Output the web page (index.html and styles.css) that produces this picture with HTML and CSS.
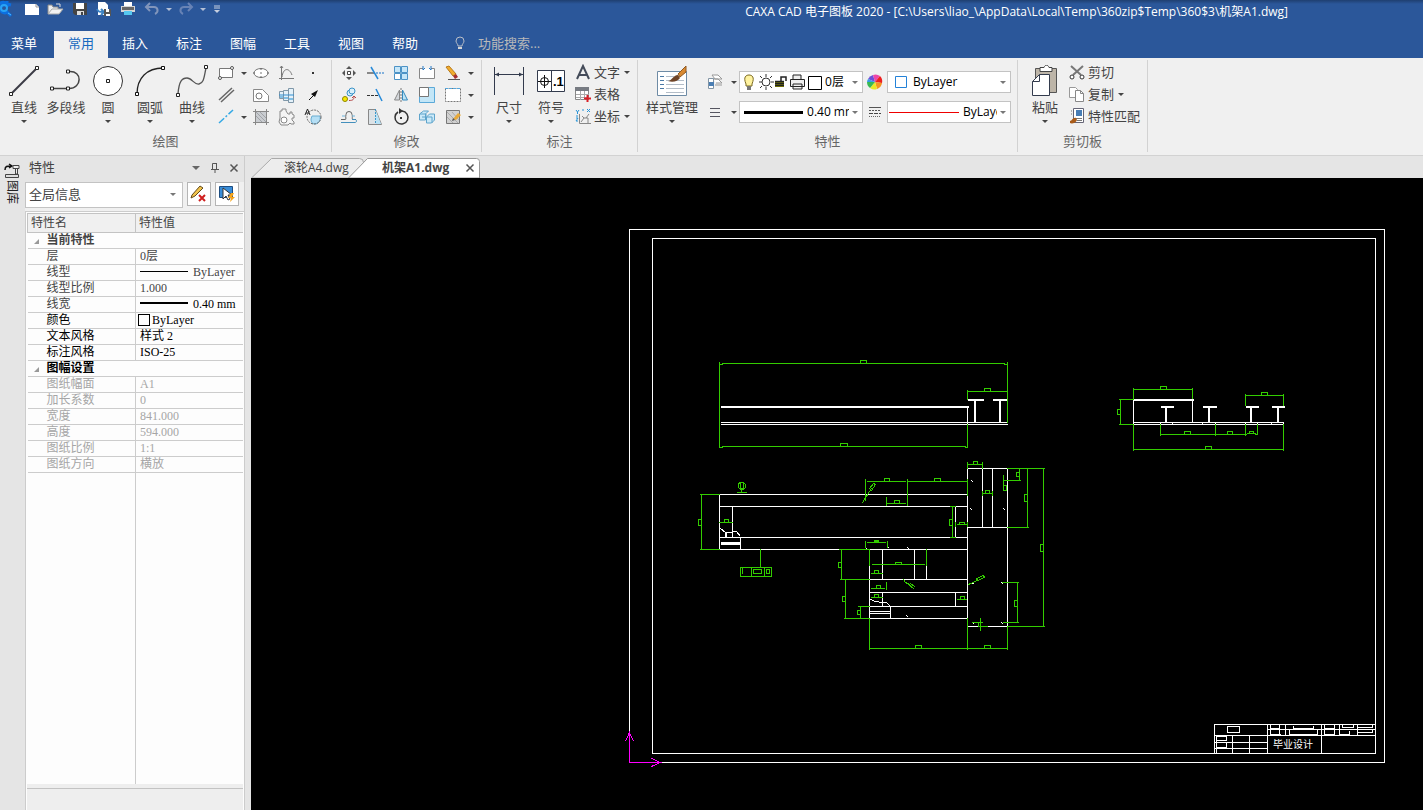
FILE: index.html
```html
<!DOCTYPE html>
<html lang="zh-CN">

<head>
    <meta charset="UTF-8">
    <title>CAXA CAD 电子图板 2020</title>
    <link rel="stylesheet" href="styles.css">
</head>

<body>
    <header class="top">
        <div class="title-bar">
            <div class="quick">
                <button class="logo" aria-label="CAXA"><svg width="20" height="18" viewBox="0 0 20 18"><path d="M-3 9a6 6 0 0 1 10-5M7 4l4 1M7 4l0-3M8 7a4 4 0 1 0-1 5l4 4" fill="none" stroke="#0c6fe0" stroke-width="3"/><circle cx="4" cy="8" r="3" fill="none" stroke="#29a3f5" stroke-width="2"/><path d="M8 13l3 2" stroke="#4fb9ff" stroke-width="1"/></svg></button>
                <button aria-label="新建"><svg width="18" height="18"><path d="M2 4h11l3 3v8H2z" fill="#fff"/><path d="M13 4v3h3" fill="none" stroke="#999"/></svg></button>
                <button aria-label="打开"><svg width="18" height="18"><path d="M1 14V5h4l1 2h5v2" fill="#eee" stroke="#888"/><path d="M1 14l4-5h11l-4 5z" fill="#f2f2f2" stroke="#aaa"/><path d="M9 4h4v3" fill="none" stroke="#ddd"/></svg></button>
                <button aria-label="保存"><svg width="18" height="18"><path d="M2 3h14v12H4l-2-2z" fill="#444"/><path d="M5 3h8v6H5z" fill="#fff"/><path d="M6 11h7v4H6z" fill="#ddd"/><path d="M10 12h2v3h-2z" fill="#444"/></svg></button>
                <button aria-label="另存为"><svg width="18" height="18"><path d="M3 2h7l3 3v10H3z" fill="#fff"/><path d="M2 9c1 3 3 3 6 3M6 9l3 3-3 3" fill="none" stroke="#3b82c4" stroke-width="2"/><path d="M9 9h7v7H9z" fill="#555"/><path d="M11 9h3v3h-3zM11 14h4v2h-4z" fill="#fff"/></svg></button>
                <button aria-label="打印"><svg width="18" height="18"><path d="M5 2h8v4H5z" fill="#fff"/><path d="M2 6h14v6H2z" fill="#d5d5d5"/><path d="M3 7h12v3H3z" fill="#666"/><path d="M5 11h8v4H5z" fill="#56c8f0"/></svg></button>
                <button aria-label="撤销"><svg width="18" height="18"><path d="M3 7h8c4 0 5 5 1 7M7 3L3 7l4 4" fill="none" stroke="#8195bb" stroke-width="2"/></svg></button>
                <button class="drop" aria-label="撤销列表"><i class="arrow pale"></i></button>
                <button aria-label="恢复"><svg width="18" height="18"><path d="M15 7H7c-4 0-5 5-1 7M11 3l4 4-4 4" fill="none" stroke="#6883b5" stroke-width="2"/></svg></button>
                <button class="drop" aria-label="恢复列表"><i class="arrow pale"></i></button>
                <button class="more" aria-label="自定义"><svg width="18" height="18"><path d="M6 6h6M6 8h6" stroke="#c6cfdf"/><path d="M6 10h6l-3 3z" fill="#c6cfdf"/></svg></button>
            </div>
            <h1>CAXA CAD 电子图板 2020 - [C:\Users\liao_\AppData\Local\Temp\360zip$Temp\360$3\机架A1.dwg]</h1>
        </div>
        <nav class="menu">
            <button class="first">菜单</button>
            <button class="active">常用</button>
            <button>插入</button>
            <button>标注</button>
            <button>图幅</button>
            <button>工具</button>
            <button>视图</button>
            <button>帮助</button>
            <label class="search">
                <svg width="12" height="14" viewBox="0 0 12 14"><path d="M4 10c0-2-2-3-2-5a4 4 0 0 1 8 0c0 2-2 3-2 5z" fill="none" stroke="#b9bec8"/><path d="M4 11h4v2H4z" fill="#d5d5d5"/></svg>
                <input type="text" placeholder="功能搜索..." aria-label="功能搜索">
            </label>
        </nav>
    </header>

    <section class="ribbon">
        <!-- 绘图 -->
        <div class="group draw">
            <div class="tools">
                <button class="big"><svg width="32" height="32"><path d="M3 29L29 3" stroke="#3b3b45" stroke-width="2"/><path d="M1.500 27.500h3v3h-3zM27.500 1.500h3v3h-3z" fill="#fff" stroke="#222"/></svg><span>直线</span><i class="arrow"></i></button>
                <button class="big"><svg width="32" height="32"><path d="M2 23.500h17c13 0 14-18 0-17" fill="none" stroke="#444" stroke-width="1.500"/><path d="M.5 22h3v3h-3zM16.500 22h3v3h-3zM16.500 5h3v3h-3z" fill="#fff" stroke="#222"/></svg><span>多段线</span></button>
                <button class="big"><svg width="32" height="32"><circle cx="16" cy="16" r="14.500" fill="#fff" stroke="#333"/><path d="M14.500 14.500h3v3h-3z" fill="#fff" stroke="#222"/></svg><span>圆</span><i class="arrow"></i></button>
                <button class="big"><svg width="32" height="32"><path d="M3 29C3 13 13 3 29 3" fill="none" stroke="#222" stroke-width="1.300"/><path d="M1.500 27.500h3v3h-3zM27.500 1.500h3v3h-3z" fill="#fff" stroke="#111"/></svg><span>圆弧</span><i class="arrow"></i></button>
                <button class="big"><svg width="32" height="32"><path d="M2 29C3 16 6 13 11 13s7 7 12 6S28 12 30 3" fill="none" stroke="#555" stroke-width="1.300"/><path d="M.5 28.500h3v3h-3zM28.500.5h3v3h-3z" fill="#fff" stroke="#222"/></svg><span>曲线</span><i class="arrow"></i></button>
                <div class="small-grid cols-draw">
                    <button aria-label="矩形"><svg width="18" height="18"><path d="M2.500 4.500h13v9h-13z" fill="#fff" stroke="#777"/><circle cx="3" cy="14" r="1.500" fill="#fff" stroke="#555"/><circle cx="15" cy="4" r="1.500" fill="#fff" stroke="#555"/></svg></button>
                    <button class="drop" aria-label="矩形选项"><i class="arrow"></i></button>
                    <button aria-label="椭圆"><svg width="18" height="18"><ellipse cx="9" cy="9" rx="7" ry="4.500" fill="#fff" stroke="#777"/><path d="M1 9h2M15 9h2M9 4v2M9 12v2" stroke="#666"/><path d="M8 9h2" stroke="#777"/></svg></button>
                    <button aria-label="公式曲线"><svg width="18" height="18"><path d="M3.500 2v14M1 14.500h15M4 13C5 4 11 3 14 11M2 4l1.500-2L5 4" fill="none" stroke="#777"/></svg></button>
                    <button aria-label="点"><svg width="18" height="18"><path d="M8 8h2v2H8z" fill="#333"/></svg></button>

                    <button aria-label="平行线"><svg width="18" height="18"><path d="M2 14L15 2M4 16L17 4" stroke="#666" stroke-width="1.500"/></svg></button>
                    <span></span>
                    <button aria-label="轮廓"><svg width="18" height="18"><path d="M1.500 3.500h9l6 6v6h-15z" fill="#fff" stroke="#888"/><circle cx="7" cy="10" r="3" fill="#fff" stroke="#777"/></svg></button>
                    <button aria-label="轴孔"><svg width="18" height="18"><path d="M1.500 5.500h4v7h-4zM5.500 4.500h5v10h-5zM10.500 2.500h5v14h-5z" fill="#e4f1f9" stroke="#7f97a8"/><path d="M1 9h15" stroke="#338fd0"/><path d="M2 11h3M6 12h4M11 13h4" stroke="#7fbfe6" stroke-width="2"/></svg></button>
                    <button aria-label="箭头"><svg width="18" height="18"><path d="M5 14l5-5" stroke="#111"/><path d="M14 4L7 8l4 3z" fill="#111"/></svg></button>

                    <button aria-label="中心线"><svg width="18" height="18"><path d="M2 15L16 2" stroke="#35a9e5" stroke-width="1.500" stroke-dasharray="7 2 2 2"/></svg></button>
                    <button class="drop" aria-label="中心线选项"><i class="arrow"></i></button>
                    <button aria-label="剖面线"><svg width="18" height="18"><path d="M3 3h12v12H3z" fill="#c9ccd0"/><path d="M1 3.500h16M1 14.500h16M3.500 1v16M14.500 1v16" stroke="#888"/><path d="M4 8l6 6M4 4l10 10M8 4l6 6" stroke="#a0a3a8"/></svg></button>
                    <button aria-label="齿轮"><svg width="18" height="18"><path d="M2 7V3h2V1h4v2l2 3h2V4h2v2l2 1v3h-2v2l2 2v2h-3l-1-1-2 2H3l-2-3 1-4z" fill="#f4f4f4" stroke="#888"/><circle cx="6" cy="12" r="3" fill="#fff" stroke="#888"/></svg></button>
                    <button aria-label="局部放大"><svg width="18" height="18"><path d="M8 8h8c1 5-2 8-5 8s-4-2-4-5z" fill="#b5dff5" stroke="#6aaed2"/><circle cx="10" cy="9" r="7" fill="none" stroke="#666" stroke-dasharray="2 1"/><path d="M1 7l2.500-6L6 7M2 5h3" fill="none" stroke="#222"/></svg></button>
                </div>
            </div>
            <h2>绘图</h2>
        </div>

        <!-- 修改 -->
        <div class="group edit">
            <div class="tools">
                <div class="small-grid cols-edit">
                    <button aria-label="平移"><svg width="18" height="18"><path d="M9 2l3 3H6zM9 16l3-3H6zM2 9l3-3v6zM16 9l-3-3v6z" fill="#555"/><path d="M7.500 7.500h3v3h-3z" fill="#fff" stroke="#444"/></svg></button>
                    <button aria-label="裁剪"><svg width="18" height="18"><path d="M1 9h8" stroke="#222"/><path d="M10 9h8" stroke="#1673c8" stroke-dasharray="2 1"/><path d="M5 3l7 12" stroke="#278ad8" stroke-width="1.500"/></svg></button>
                    <button aria-label="阵列"><svg width="18" height="18"><path d="M2.500 2.500h6v6h-6zM9.500 2.500h6v6h-6zM9.500 9.500h6v6h-6z" fill="#c6e6f8" stroke="#4c93c6"/><path d="M2.500 9.500h6v6h-6z" fill="#fff" stroke="#4c93c6"/></svg></button>
                    <button aria-label="打断"><svg width="18" height="18"><path d="M5 4.500H1.500v10h15v-10H13" fill="#fff" stroke="#888"/><path d="M5 2v4l2-2M13 2v4l-2-2" fill="none" stroke="#2479c6"/></svg></button>
                    <button aria-label="删除"><svg width="18" height="18"><path d="M2 3l3-1 7 8-3 2z" fill="#f2ad2e" stroke="#b87a1c"/><path d="M9 12l3-2 2 3-3 2z" fill="#a62f2f"/><path d="M4 15.500h12" stroke="#555"/></svg></button>
                    <button class="drop" aria-label="删除选项"><i class="arrow"></i></button>

                    <button aria-label="平移复制"><svg width="18" height="18"><circle cx="5" cy="13" r="2.500" fill="#f6e800" stroke="#8e8600"/><circle cx="10" cy="7" r="3" fill="#d8effa" stroke="#3b93c8"/><circle cx="12" cy="5" r="3" fill="#d8effa" stroke="#3b93c8"/><path d="M9 14.500c4 0 5-1 5-4M12 12l2-2 2 2" fill="none" stroke="#b44747"/></svg></button>
                    <button aria-label="延伸"><svg width="18" height="18"><path d="M1 9.500h3M5 9.500h7" stroke="#333" stroke-dasharray="3 1"/><path d="M10 3l6 12" stroke="#278ad8" stroke-width="1.500"/></svg></button>
                    <button aria-label="镜像"><svg width="18" height="18"><path d="M7.500 4v10h-5z" fill="#d4d7db" stroke="#888"/><path d="M10.500 4v10h5z" fill="#bde3f5" stroke="#358abd"/><path d="M9 2v14" stroke="#777" stroke-dasharray="2 1"/></svg></button>
                    <button aria-label="缩放"><svg width="18" height="18"><path d="M1.500 1.500h15v15h-15z" fill="#c3e6f7" stroke="#5ba9d8"/><path d="M1.500 1.500h9v9h-9z" fill="#fff" stroke="#777"/></svg></button>
                    <button aria-label="拉伸"><svg width="18" height="18"><path d="M1.500 2.500h15v13h-15z" fill="#fff" stroke="#777" stroke-dasharray="2 1"/><path d="M1 2.500h16" stroke="#55a7dd" stroke-dasharray="3 1"/></svg></button>
                    <button class="drop" aria-label="拉伸选项"><i class="arrow"></i></button>

                    <button aria-label="等距线"><svg width="18" height="18"><path d="M1 11.500h4c2 0 0-2 1-5a3 3 0 0 1 6 0c1 3-1 5 2 5h2" fill="none" stroke="#666"/><path d="M1 14.500h14c2 0 2-3 0-3h-3" fill="none" stroke="#438fbc"/><path d="M2 8h3M12 8h3" stroke="#6fb4dc"/></svg></button>
                    <button aria-label="倒角"><svg width="18" height="18"><path d="M2.500 1.500h7l6 15h-13z" fill="#dce2e6" stroke="#888"/><path d="M10 3l5 13h-5z" fill="#b9e2f6"/><path d="M9.500 1v15" stroke="#3b97cb" stroke-dasharray="2 1"/></svg></button>
                    <button aria-label="旋转"><svg width="18" height="18"><path d="M10 3a6.500 6.500 0 1 1-4 1" fill="none" stroke="#333" stroke-width="1.500"/><path d="M7 0v6l4-3z" fill="#333"/><path d="M8 9h2v2H8z" fill="#333"/></svg></button>
                    <button aria-label="分解"><svg width="18" height="18"><path d="M1.500 6l4-3h5l-3 3v6h-6zM8.500 9l3-3h5v6l-3 3h-5z" fill="#cbe9f8" stroke="#5fa4cb"/><path d="M2 6h6v6M9 9h5v6M4 9h4" fill="none" stroke="#5fa4cb"/></svg></button>
                    <button aria-label="填充编辑"><svg width="18" height="18"><path d="M2.500 2.500h13v13h-13z" fill="#d1d1d1" stroke="#777"/><path d="M3 9l6 6M3 4l11 11M8 4l7 8" stroke="#aaa"/><path d="M9 11l5-6 3 2-5 5z" fill="#e7a93a"/><path d="M8 13l1-3 2 2z" fill="#555"/></svg></button>
                    <button class="drop" aria-label="编辑选项"><i class="arrow"></i></button>
                </div>
            </div>
            <h2>修改</h2>
        </div>

        <!-- 标注 -->
        <div class="group note">
            <div class="tools">
                <button class="big"><svg width="32" height="32"><path d="M1.500 2v28M30.500 2v28M2 9.500h28" stroke="#333b4d"/><path d="M2 9.500l4-2v4zM30 9.500l-4-2v4z" fill="#333b4d"/></svg><span>尺寸</span><i class="arrow"></i></button>
                <button class="big"><svg width="32" height="32"><path d="M2.500 5.500h27v21h-27zM16.500 5v22" fill="#fff" stroke="#333b4d"/><circle cx="9.500" cy="16.500" r="4" fill="none" stroke="#111"/><path d="M3 16.500h13M9.500 10v13" stroke="#111"/><text x="18" y="21" class="icon-text">.1</text></svg><span>符号</span><i class="arrow"></i></button>
                <div class="list">
                    <button><svg width="16" height="16"><path d="M2 15L8 2l6 13M4 11h8" fill="none" stroke="#444b59" stroke-width="2"/></svg><span>文字</span><i class="arrow"></i></button>
                    <button><svg width="16" height="16"><path d="M.5 1.500h13v12H.5z" fill="#fff" stroke="#888"/><path d="M0 1h14v4H0z" fill="#777b82"/><path d="M1 8.500h13M1 11.500h13M5.500 5v9M9.500 5v9" stroke="#aaa"/><path d="M9 12.500h7M12.500 9v7" stroke="#d91f26" stroke-width="2"/></svg><span>表格</span></button>
                    <button><svg width="16" height="16"><path d="M4.500 6v9.500H16M6 14l3-4-2-2M9 10h4v5M11 10l3-4" fill="none" stroke="#888"/><path d="M1 2l1.500 2L4 2M2.500 4v2M12 1l3 3M15 1l-3 3M1 10h2l-2 3h2M7 2h2M1 8h2" fill="none" stroke="#2794d8"/></svg><span>坐标</span><i class="arrow"></i></button>
                </div>
            </div>
            <h2>标注</h2>
        </div>

        <!-- 特性 -->
        <div class="group props">
            <div class="tools">
                <button class="big wide"><svg width="32" height="32"><path d="M1.500 6.500h29v24h-29z" fill="#fff" stroke="#6e8ba5"/><path d="M4 11.500h4M4 15.500h4M4 19.500h4M4 23.500h4" stroke="#4b79a5"/><path d="M10 11.500h8M10 15.500h18M10 19.500h18M10 23.500h18M10 27.500h18" stroke="#b3bdc8"/><path d="M22 9l8-8v6l-6 5z" fill="#d98a32" stroke="#8f5820"/><path d="M12 16c4 0 5-6 10-6l2 3c-2 3-7 5-12 3z" fill="#6f4426"/></svg><span>样式管理</span><i class="arrow"></i></button>
                <div class="combos">
                    <button aria-label="图层"><svg width="18" height="18"><path d="M6 2h6l4 4h-7zM7 6h5l4 4h-6M9 12h7" fill="#fff" stroke="#999"/><path d="M2.500 5.500h5v10h-5z" fill="#fff" stroke="#8295a5"/><path d="M3 9h5v4H3z" fill="#4c7fb3"/></svg></button>
                    <button class="drop" aria-label="图层选项"><i class="arrow"></i></button>
                    <div class="combo">
                        <svg width="84" height="18">
                            <path d="M6 11C3 4 6 2 9 2s6 2 3 9v2H6z" fill="#fff3a0" stroke="#7b6920"/><path d="M7 13h4v4H7z" fill="#777"/>
                            <circle cx="26" cy="9" r="4" fill="#fff" stroke="#333"/><path d="M26 1v3M26 14v3M19 9h3M31 9h3M20 3l2 2M32 3l-2 2M20 15l2-2M32 15l-2-2" stroke="#333"/>
                            <path d="M35 8h9v6h-9z" fill="#8b8c00"/><path d="M35 8.500h9M35 10.500h9M35 12.500h9M41 8V4h5v4" fill="none" stroke="#222" stroke-width="1.500"/>
                            <path d="M53 6V2h8v4M50.500 6.500h14v7h-14zM53 11h9v5h-9z" fill="#eee" stroke="#222"/>
                            <path d="M68.500 3.500h13v13h-13z" fill="#fff" stroke="#000"/>
                        </svg>
                        <select class="layer" aria-label="图层"><option>0层</option></select><i class="arrow grey"></i>
                    </div>
                    <span class="cell"><svg width="16" height="16"><path d="M8 8L1 5a7.500 7.500 0 0 1 5-4z" fill="#6d4fd8"/><path d="M8 8L6 1a7.500 7.500 0 0 1 7 1z" fill="#ed46a7"/><path d="M8 8l5-6a7.500 7.500 0 0 1 2 7z" fill="#ed2020"/><path d="M8 8l7 1a7.500 7.500 0 0 1-5 6z" fill="#f59520"/><path d="M8 8l2 7a7.500 7.500 0 0 1-7-1z" fill="#e9e827"/><path d="M8 8l-5 6a7.500 7.500 0 0 1-3-6z" fill="#38b952"/><path d="M8 8L0 8a7.500 7.500 0 0 1 1-3z" fill="#369be9"/></svg></span>
                    <div class="combo">
                        <svg width="20" height="16"><path d="M7.500 2.500h11v11h-11z" fill="#fff" stroke="#2482d8"/></svg>
                        <select class="color" aria-label="颜色"><option>ByLayer</option></select><i class="arrow grey"></i>
                    </div>

                    <button aria-label="线宽设置"><svg width="18" height="18"><path d="M4 5.500h10M4 9.500h10M4 13.500h10" stroke="#555560"/></svg></button>
                    <button class="drop" aria-label="线宽选项"><i class="arrow"></i></button>
                    <div class="combo">
                        <svg width="64" height="16"><path d="M4 8.500h59" stroke="#000" stroke-width="3"/></svg>
                        <select aria-label="线宽"><option>0.40 mm</option></select><i class="arrow grey"></i>
                    </div>
                    <span class="cell"><svg width="14" height="16"><path d="M1 3.500h12" stroke="#555"/><path d="M1 6.500h12" stroke="#555" stroke-dasharray="2 1"/><path d="M1 9.500h12" stroke="#444" stroke-dasharray="4 1"/><path d="M1 12.500h12" stroke="#666" stroke-dasharray="1 1"/></svg></span>
                    <div class="combo">
                        <svg width="72" height="16"><path d="M1 8.500h70" stroke="#e00"/></svg>
                        <select aria-label="线型"><option>ByLayer</option></select><i class="arrow grey"></i>
                    </div>
                </div>
            </div>
            <h2>特性</h2>
        </div>

        <!-- 剪切板 -->
        <div class="group clip">
            <div class="tools">
                <button class="big"><svg width="32" height="32"><path d="M6.500 3.500h21v24h-21z" fill="#bdb5a8" stroke="#555"/><path d="M11 2.500h4c1-3 4-3 5 0h3v4H11z" fill="#fff" stroke="#444"/><path d="M10.500 9.500h10v21h-17v-14z" fill="#fff" stroke="#333b4d"/><path d="M10.500 9.500v7h-7" fill="none" stroke="#333b4d"/></svg><span>粘贴</span><i class="arrow"></i></button>
                <div class="list">
                    <button><svg width="16" height="16"><path d="M2 2l10 9M14 2L4 11" stroke="#777" stroke-width="2"/><circle cx="3" cy="13" r="2" fill="#fff" stroke="#333"/><circle cx="13" cy="13" r="2" fill="#fff" stroke="#333"/></svg><span>剪切</span></button>
                    <button><svg width="16" height="16"><path d="M.5 1.500h6l2 2v8h-8z" fill="#fff" stroke="#999"/><path d="M6.500 4.500h5l3 3v8h-8z" fill="#fff" stroke="#888"/><path d="M11.500 4.500v3h3" fill="none" stroke="#888"/></svg><span>复制</span><i class="arrow"></i></button>
                    <button><svg width="16" height="16"><path d="M4.500.5h10v14h-10z" fill="#fff" stroke="#667"/><path d="M7 2h6v6H7z" fill="#477db5"/><path d="M2 3h1M2 6h1M7 10.500h6M8 12.500h5" stroke="#777"/><path d="M1 13c2 0 3-4 6-3l1 2c-1 3-5 4-7 3z" fill="#a95b19"/></svg><span>特性匹配</span></button>
                </div>
            </div>
            <h2>剪切板</h2>
        </div>
    </section>

    <main class="work">
        <aside class="side">
            <button class="side-tab"><svg width="16" height="16"><path d="M1 7c0-4 2-4 6-4M5 1l3 2-3 2" fill="none" stroke="#111" stroke-width="1.500"/><path d="M9 2.500h6v3H9zM11.500 6v5h2V6" fill="#eee" stroke="#444"/><path d="M1.500 11.500h13v3h-13z" fill="#ddd" stroke="#444"/></svg><span>图库</span></button>
        </aside>

        <section class="panel">
            <div class="panel-head">
                <h2>特性</h2>
                <button aria-label="菜单"><svg width="10" height="10"><path d="M1 3h8L5 7z" fill="#666"/></svg></button>
                <button aria-label="固定"><svg width="10" height="10"><path d="M2.500 6V.500h4V6M1 6.500h8M5 7v3M6.500 0v6" fill="none" stroke="#555"/></svg></button>
                <button aria-label="关闭"><svg width="10" height="10"><path d="M1.500 1.500l7 7M8.500 1.500l-7 7" stroke="#555" stroke-width="1.500"/></svg></button>
            </div>
            <div class="panel-bar">
                <div class="pick"><select aria-label="对象"><option>全局信息</option></select><i class="arrow grey"></i></div>
                <button aria-label="清除"><svg width="18" height="18"><path d="M2 10l8-9 3 2-8 8-4 2z" fill="#f2c44b" stroke="#624a1d"/><path d="M9 10l6 6M15 10l-6 6" stroke="#cf1f1f" stroke-width="2"/></svg></button>
                <button aria-label="快速选择"><svg width="18" height="18"><path d="M1.500 1.500h13v11h-13z" fill="#398dd8" stroke="#1e4d80"/><path d="M5 3v11l3-3 2 4 2-1-2-4h4z" fill="#fff" stroke="#333"/><path d="M13 8l-3 5h3l-1 4 5-5h-3l2-4z" fill="#f8a51b"/></svg></button>
            </div>
            <div class="sheet">
                <table>
                    <thead>
                        <tr><th>特性名</th><th>特性值</th></tr>
                    </thead>
                    <tbody>
                        <tr class="sec"><th colspan="2"><i></i>当前特性</th></tr>
                        <tr><td>层</td><td>0层</td></tr>
                        <tr><td>线型</td><td><b class="line"></b>ByLayer</td></tr>
                        <tr><td>线型比例</td><td>1.000</td></tr>
                        <tr class="dark-value"><td>线宽</td><td><b class="line thick"></b>0.40 mm</td></tr>
                        <tr class="dark"><td>颜色</td><td class="has-box"><b class="box"></b>ByLayer</td></tr>
                        <tr class="dark"><td>文本风格</td><td>样式 2</td></tr>
                        <tr class="dark"><td>标注风格</td><td>ISO-25</td></tr>
                        <tr class="sec dark"><th colspan="2"><i></i>图幅设置</th></tr>
                        <tr class="off"><td>图纸幅面</td><td>A1</td></tr>
                        <tr class="off"><td>加长系数</td><td>0</td></tr>
                        <tr class="off"><td>宽度</td><td>841.000</td></tr>
                        <tr class="off"><td>高度</td><td>594.000</td></tr>
                        <tr class="off"><td>图纸比例</td><td>1:1</td></tr>
                        <tr class="off"><td>图纸方向</td><td>横放</td></tr>
                    </tbody>
                </table>
                <div class="rest"></div>
                <div class="hint"></div>
            </div>
        </section>

        <section class="doc">
            <div class="doc-tabs">
                <button class="tab"><svg width="117" height="20"><path d="M.5 20L20.500.500h88q4 0 4 4V20z" fill="#ededed" stroke="#aaa"/></svg><span>滚轮A4.dwg</span></button>
                <button class="tab current"><svg width="132" height="20"><path d="M.5 20L19.500.500h109q3 0 3 3V20z" fill="#fff" stroke="#999"/></svg><span>机架A1.dwg</span></button>
                <button class="close" aria-label="关闭"><svg width="10" height="10"><path d="M1.500 1.500l7 7M8.500 1.500l-7 7" stroke="#555" stroke-width="1.500"/></svg></button>
            </div>
            <svg class="canvas" viewBox="251 178 1172 632" preserveAspectRatio="xMinYMin slice">
                <g transform="translate(.5 .5)" fill="none" shape-rendering="crispEdges">
                    <!-- 图框 -->
                    <path stroke="#fff" d="M629 229H1384V762H629zM652 238H1375V753H652z"/>

                    <!-- 主视图 -->
                    <path stroke="#fff" d="M720 422H1007M720 424H1007M967 407V424"/>
                    <path class="w2" d="M720 406.500H968M967 399.500H983M992 399.500H1007M974.500 400V422M999.500 400V422"/>
                    <path class="dim" d="M719 362V447M1007 362V422M722 363H1004M719 364H722M1004 364H1007M860 363V360H866V363M967 390V399M967 391H1007M984 391V388H990V391M967 424V447M722 446H965M719 447H722M965 447H967M840 446V443H847V446"/>

                    <!-- 俯视图 横梁 -->
                    <path stroke="#fff" d="M719 494H967M719 506H967M719 537H967M719 549H967M719 494V549M732 506V537M740 537V549M955 506V537M967 468H1007V626H967zM982 468V527M992 468V527M967 527H1007M720 528l5 4h5l3-1h3l4 5"/>
                    <path stroke="#fff" stroke-width="3" d="M720 543H740"/>
                    <path class="w2" d="M725.500 532V537"/>

                    <!-- 俯视图 下部 -->
                    <path stroke="#fff" d="M869 549V618M882 549V579M914 549V579M926 549V579M869 579H967M869 592H967M869 606H967M869 618H967M882 592V606M955 592V606M890 606V618M869 611H890M869 613H890M869 598l5 3 8 1h4l4 4"/>
                    <path class="dot" d="M971 480l1 1M970 508l1 1M1003 508l1 1M1001 582l1 1M1001 622l1 1M972 583l1 0M972 622l1 1M906 615l1 1M865 547l1 1M887 547l1 0M907 547l1 1M886 497v1M907 498v1M886 583v1M1003 481v1M865 498v1"/>

                    <!-- 俯视图尺寸 -->
                    <path class="dim" d="M700 494H719M701 494V549M700 549H719M701 519H698V525H701M719 522H732M724 522V519H728V522"/>
                    <path class="dim" d="M739 482h4l2 2v3l-2 2h-3l-2-2v-3zM740 482v6h3v-6M741 489v3M737 492H746"/>
                    <path class="dim" d="M760 549V567M740 567H771V576H740zM751 567V576M764 567V576M742 567V573M753 569H761V573H753zM766 569H769V573H766z"/>
                    <path class="dim" d="M865 479V500M867 481H905M907 479V505M908 481H967M884 481V478H889V481zM934 481V478H940V481zM886 497V505M886 503H905M894 503V500H899V503zM862 502l9-14M869 488l4-5 2 1-4 6z"/>
                    <path class="dim" d="M967 462V468M982 462V468M967 464H982M973 464V461H977V464M967 479V495M982 491V495M992 491V495M982 493H992M985 493V490H989V493zM1003 475V490M1003 485H1006V490H1004M1003 480H1020M1019 468V480M1019 472H1016V476H1019"/>
                    <path class="dim" d="M1007 468H1044M1027 468V527M1007 527H1028M1027 494H1024V501H1027M1043 468V626M1007 626H1044M1043 544H1040V551H1043M1017 582V622M1002 582H1018M1003 622H1018M1017 600H1014V606H1017"/>
                    <path class="dim" d="M968 584l9-4M976 578l7-3 1 2-7 3zM972 622H982M980 618V630M980 622H978V626H987"/>
                    <path class="dim" d="M950 506H955M952 506V537M950 537H955M952 519H949V525H952M955 522V526M967 522V526M957 524H966M959 524V522H964V524M865 541V547M887 541V547M867 542H885M874 542V540H878V542M875 541H878"/>
                    <path class="dim" d="M839 549H869M841 549V579M840 579H869M841 562H838V567H841M845 579V618M844 618H869M845 596H842V601H845M858 606H869M860 606V618M860 610H857V614H860"/>
                    <path class="dim" d="M869 550V565M926 549V565M872 564H924M895 564V562H901V564M871 573H882M874 573V570H878V573zM871 588H884M886 582V589M876 588V585H880V588zM871 597H882M874 597V594H878V597zM957 599H966M960 599V596H964V599zM903 579l2 3 4 2M908 584l5 4M910 583l4 3"/>
                    <path class="dim" d="M869 618V649M967 618V649M1007 626V649M869 648H1007M915 648V645H921V648M984 648V645H990V648"/>

                    <!-- 左视图 -->
                    <path stroke="#fff" d="M1133 399V424M1192 400V422M1133 422H1283M1133 424H1283M1283 422V424M1160 422V424M1172 422V424M1202 422V424M1215 422V424M1245 422V424M1257 422V424M1271 422V424"/>
                    <path class="w2" d="M1133 399.500H1193M1160 406.500H1173M1202 406.500H1216M1245 406.500H1258M1271 406.500H1284M1165.500 407V422M1208.500 407V422M1250.500 407V422M1277.500 407V422"/>
                    <path class="dim" d="M1133 388V398M1192 388V398M1133 389H1192M1160 389V386H1166V389M1119 399H1133M1119 424H1133M1120 399V424M1120 409H1117V414H1120M1245 394V405M1283 394V405M1245 395H1283M1261 395V392H1267V395"/>
                    <path class="dim" d="M1160 424V435M1215 424V435M1245 424V435M1257 424V434M1160 434H1246M1255 434H1257M1247 433H1255M1184 434V431H1190V434M1227 434V431H1232V434M1249 433V431H1253V433M1133 424V450M1283 424V450M1133 449H1283M1205 449V446H1211V449"/>

                    <!-- 标题栏 -->
                    <path stroke="#fff" d="M1214 753V724H1375M1214 735H1375M1267 724V753M1321 724V753M1267 729H1375M1214 742H1267M1214 748H1267M1216 735V753M1232 735V753M1249 735V753M1227 726H1239V732H1227zM1216 736H1226V740H1216zM1216 742H1226V747H1216zM1270 724V735M1279 724V735M1285 724V735M1293 725V728H1313V725M1289 729V734H1317V729M1270 734H1280M1270 728H1279M1324 724V734H1334V724M1324 728H1334M1339 724V734H1349V730M1342 724V727H1353V724M1357 724V735M1357 727H1372V724M1357 732H1372V729"/>

                    <path stroke="#f0f" d="M629 762V732M629 762H660"/>
                    <path stroke="#f0f" d="M625 741l4-9 4 9M651 758l9 4-9 4"/>
                </g>
                <text x="1273" y="748" class="stamp">毕业设计</text>
            </svg>
        </section>
    </main>
</body>

</html>
```
FILE: styles.css
```css
* {
    margin: 0;
    padding: 0;
    box-sizing: border-box;
}

body {
    height: 100vh;
    display: flex;
    flex-direction: column;
    overflow: hidden;
    background: #e5e5e5;
    color: #444;
    font: 13px/18px "Open Sans", "Noto Sans CJK SC", sans-serif;
}

button,
input,
select {
    border: 0;
    background: none;
    color: inherit;
    font: inherit;
    outline: none;
}

button {
    display: flex;
    align-items: center;
    justify-content: center;
    white-space: nowrap;
}

select {
    appearance: none;
    flex: 1;
    min-width: 0;
}

svg {
    display: block;
    flex: none;
}

h1,
h2 {
    font-size: 13px;
    font-weight: normal;
}

.arrow {
    flex: none;
    width: 0;
    border: 3px solid transparent;
    border-top-color: #444;
    border-bottom: 0;
}

.arrow.pale {
    border-top-color: #b4c0d6;
}

.arrow.grey {
    border-top-color: #777;
}

/* 标题栏 */
.top {
    background: linear-gradient(#1f3f70, #2b579a 4px);
    color: #fff;
}

.title-bar {
    height: 31px;
    display: flex;
    align-items: flex-start;
}

.title-bar h1 {
    margin: 0 135px 0 auto;
    font-size: 12px;
    line-height: 24px;
    white-space: nowrap;
}

.quick {
    display: flex;
}

.quick button {
    width: 24px;
    height: 18px;
}

.quick .logo {
    width: 20px;
}

.quick .drop {
    width: 10px;
}

.quick .more {
    width: 18px;
}

.menu {
    display: flex;
    height: 27px;
}

.menu button {
    width: 54px;
    padding-bottom: 4px;
}

.menu .first {
    width: 48px;
    margin-right: 6px;
}

.menu .active {
    background: #f0f0f0;
    color: #1569c0;
}

.search {
    display: flex;
    align-items: center;
    gap: 12px;
    padding: 0 0 4px 22px;
}

.search input {
    width: 160px;
}

.search input::placeholder {
    color: #b9b9b9;
    opacity: 1;
}

/* 功能区 */
.ribbon {
    display: flex;
    height: 98px;
    padding: 2px 0 3px;
    background: #f0f0f0;
    border-bottom: 1px solid #d2d2d2;
}

.group {
    display: flex;
    flex-direction: column;
    border-right: 1px solid #d2d2d2;
}

.group h2 {
    color: #666;
    line-height: 18px;
    text-align: center;
}

.tools {
    display: flex;
    height: 72px;
    padding: 2px 6px 0 4px;
}

.draw .tools {
    padding: 2px 5px 0 3px;
}

.note .tools {
    padding-left: 6px;
    padding-right: 7px;
}

.clip .tools {
    padding-left: 6px;
    padding-right: 7px;
}

.big {
    flex-direction: column;
    justify-content: flex-start;
    width: 42px;
    padding-top: 3px;
}

.big span {
    line-height: 20px;
}

.big .arrow {
    margin-top: 3px;
}

.wide {
    width: 60px;
}

.icon-text {
    font: bold 13px "Liberation Sans", sans-serif;
    fill: #000;
}

.small-grid {
    display: grid;
    grid-auto-rows: 22px;
}

.cols-draw {
    grid-template-columns: 26px 9px 26px 26px 26px;
}

.cols-edit {
    grid-template-columns: repeat(5, 26px) 9px;
}

.list {
    display: flex;
    flex-direction: column;
    padding-left: 3px;
}

.list button {
    height: 22px;
    padding-bottom: 2px;
    justify-content: flex-start;
    gap: 3px;
}

.list .arrow {
    margin-left: 1px;
}

.combos {
    display: grid;
    grid-template-columns: 26px 11px 124px 24px 124px;
    grid-auto-rows: 22px;
    row-gap: 8px;
    padding-top: 9px;
}

.cell {
    display: flex;
    align-items: center;
    justify-content: center;
}

.combo,
.pick {
    display: flex;
    align-items: center;
    background: #fff;
    border: 1px solid #c3c3c3;
}

.combo {
    padding-right: 4px;
    color: #000;
    font-size: 12px;
}

.combo select {
    margin: 0 3px;
}

.combo .layer {
    margin-left: 1px;
}

.combo .color {
    margin-left: 5px;
}

/* 工作区 */
.work {
    flex: 1;
    min-height: 0;
    display: flex;
}

.side {
    width: 25px;
    padding: 7px 4px;
}

.side-tab {
    flex-direction: column;
    gap: 1px;
    width: 16px;
}

.side-tab span {
    writing-mode: vertical-rl;
    text-orientation: sideways;
    font-size: 12px;
    line-height: 16px;
    color: #222;
}

.panel {
    display: flex;
    flex-direction: column;
    width: 220px;
    margin-right: 6px;
    background: #f0f0f0;
    border-right: 1px solid #ccc;
}

.panel-head {
    display: flex;
    height: 26px;
    padding: 0 1px 2px 4px;
    background: #e5e5e5;
}

.panel-head h2 {
    flex: 1;
    line-height: 22px;
}

.panel-head button {
    width: 19px;
}

.panel-bar {
    display: flex;
    gap: 4px;
    height: 29px;
    padding-right: 5px;
}

.panel-bar button {
    width: 24px;
    height: 24px;
    background: #fff;
    border: 1px solid #b5b5b5;
}

.pick {
    flex: 1;
    height: 26px;
    padding: 0 6px 2px 3px;
}

.sheet {
    flex: 1;
    display: flex;
    flex-direction: column;
    padding: 1px 1px 0;
    border: 1px solid #ccc;
    border-right: 0;
    border-bottom: 0;
    background: #fdfdfd;
}

.sheet table {
    width: 100%;
    table-layout: fixed;
    border-collapse: collapse;
    font: 12px/15px "Liberation Serif", "Noto Sans CJK SC", serif;
}

.sheet th,
.sheet td {
    height: 16px;
    padding: 0 4px;
    text-align: left;
    white-space: nowrap;
    border-bottom: 1px solid #ccc;
}

.sheet td:first-child {
    padding-left: 19px;
    border-right: 1px solid #ccc;
}

.sheet thead th {
    height: 19px;
    padding: 0 3px;
    background: #f0f0f0;
    border: 1px solid #c3c3c3;
    border-right: 0;
    font-weight: normal;
}

.sheet thead th:first-child {
    width: 108px;
}

.sheet .sec i {
    display: inline-block;
    width: 0;
    margin: 0 8px 0 2px;
    border-left: 5px solid transparent;
    border-bottom: 5px solid #999;
}

.sheet .line {
    display: inline-block;
    width: 48px;
    margin-right: 5px;
    border-top: 1px solid #000;
    vertical-align: 4px;
}

.sheet .thick {
    border-top-width: 2px;
}

.sheet .box {
    display: inline-block;
    width: 12px;
    height: 12px;
    margin-right: 2px;
    border: 1px solid #000;
    vertical-align: -2px;
}

.sheet td.has-box {
    padding-left: 2px;
}

.sheet .dark,
.sheet .dark-value td:last-child {
    color: #000;
}

.sheet .off {
    color: #a6a6a6;
}

.rest {
    flex: 1;
    width: 109px;
    border-right: 1px solid #ccc;
}

.hint {
    height: 26px;
    background: linear-gradient(#eee 4px, #c3c3c3 4px, #c3c3c3 5px, #eee 5px);
}

/* 绘图区 */
.doc {
    flex: 1;
    min-width: 0;
    display: flex;
    flex-direction: column;
}

.doc-tabs {
    display: flex;
    height: 22px;
    padding-top: 2px;
}

.tab {
    position: relative;
    height: 20px;
    padding-left: 33px;
    width: 97px;
    justify-content: flex-start;
    font-size: 12px;
}

.tab svg {
    position: absolute;
    left: 0;
    top: 0;
}

.tab span {
    position: relative;
}

.current {
    width: 112px;
    padding-left: 34px;
    font-weight: bold;
}

.close {
    position: relative;
    width: 20px;
}

.canvas {
    flex: 1;
    min-height: 0;
    width: 100%;
    background: #000;
}

.dim {
    stroke: #3c0;
    stroke-linecap: square;
}

.w2 {
    stroke: #fff;
    stroke-width: 2;
}

.dot {
    stroke: #fff;
    stroke-linecap: square;
}

.stamp {
    font: 10px "Noto Sans CJK SC", sans-serif;
    fill: #fff;
}
```
